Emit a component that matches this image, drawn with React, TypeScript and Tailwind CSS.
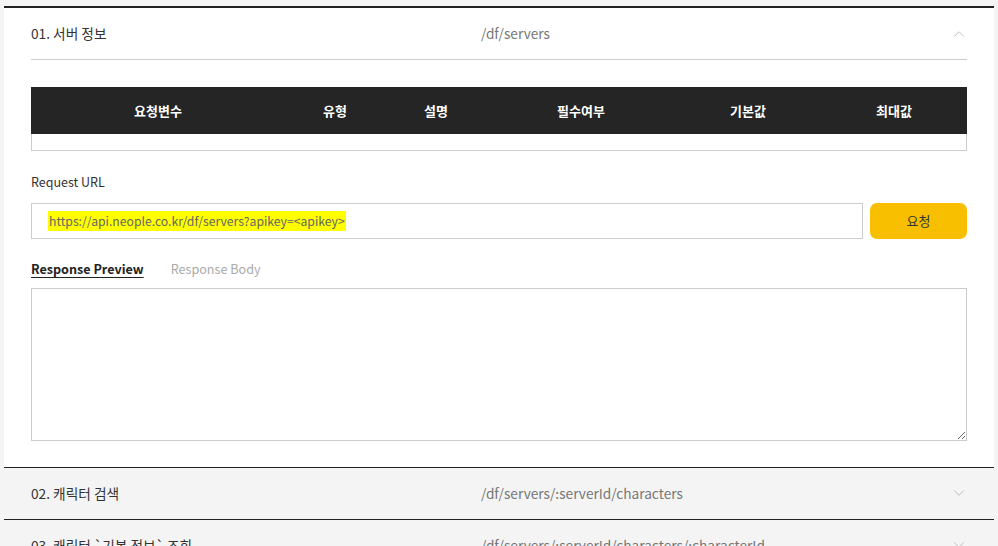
import { ChevronDown, ChevronUp } from 'lucide-react'

const columns = [
  { label: '요청변수', w: 'w-[254px]' },
  { label: '유형', w: 'w-[100px]' },
  { label: '설명', w: 'w-[102px]' },
  { label: '필수여부', w: 'w-[188px]' },
  { label: '기본값', w: 'w-[146px]' },
  { label: '최대값', w: 'flex-1' },
]

const collapsed = [
  { name: '02. 캐릭터 검색', path: '/df/servers/:serverId/characters' },
  { name: '03. 캐릭터 `기본 정보` 조회', path: '/df/servers/:serverId/characters/:characterId' },
]

function RowHeader({ name, path, open }: { name: string; path: string; open?: boolean }) {
  return (
    <div className="flex h-[51px] items-center text-[13.7px]">
      <span className="w-[450px] text-[#333]">{name}</span>
      <span className="flex-1 text-[#777]">{path}</span>
      {open ? (
        <ChevronUp className="mr-[-1px] h-[18px] w-[18px] text-[#aaa]" strokeWidth={1} />
      ) : (
        <ChevronDown className="mr-[-1px] h-[18px] w-[18px] text-[#aaa]" strokeWidth={1} />
      )}
    </div>
  )
}

export default function App() {
  return (
    <div
      className="min-h-screen bg-[#f4f4f4] px-[4px] pt-[6px]"
      style={{ fontFamily: '"Noto Sans CJK KR", "Noto Sans", sans-serif' }}
    >
      <div className="border-t-2 border-[#222] bg-white px-[27px] pb-[26px]">
        <div className="border-b border-[#ccc]">
          <RowHeader name="01. 서버 정보" path="/df/servers" open />
        </div>

        <div className="mt-[27px]">
          <div className="flex h-[47px] items-center bg-[#252525] text-[13px] font-bold text-white">
            {columns.map((c) => (
              <div key={c.label} className={`${c.w} text-center`}>
                {c.label}
              </div>
            ))}
          </div>
          <div className="h-[17px] border-x border-b border-[#ccc]" />
        </div>

        <p className="mt-[22px] text-[12.5px] text-[#333]">Request URL</p>

        <div className="mt-[11px] flex gap-[7px]">
          <div className="flex h-[36px] flex-1 items-center border border-[#ccc] px-[16px]">
            <span className="bg-[#ffff00] px-[1px] py-[1px] text-[12.2px] text-[#666]">
              https://api.neople.co.kr/df/servers?apikey=&lt;apikey&gt;
            </span>
          </div>
          <button className="h-[36px] w-[97px] rounded-[7px] bg-[#f8bf00] text-[13px] text-[#333]">
            요청
          </button>
        </div>

        <div className="mt-[21px] flex gap-[27px] text-[12.6px]">
          <span className="font-bold text-[#222] underline underline-offset-[3px]">Response Preview</span>
          <span className="text-[#aaa]">Response Body</span>
        </div>

        <textarea className="mt-[9px] block h-[153px] w-full resize-y border border-[#ccc] outline-none" />
      </div>

      {collapsed.map((r) => (
        <div key={r.name} className="border-t border-[#222] px-[27px]">
          <RowHeader name={r.name} path={r.path} />
        </div>
      ))}
    </div>
  )
}
